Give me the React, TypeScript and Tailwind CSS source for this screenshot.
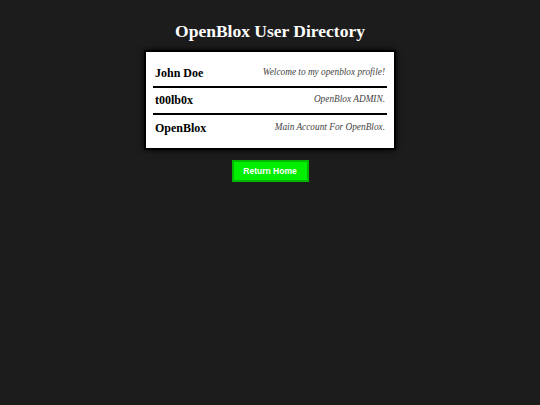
const USERS = [
  { name: "John Doe", bio: "Welcome to my openblox profile!" },
  { name: "t00lb0x", bio: "OpenBlox ADMIN." },
  { name: "OpenBlox", bio: "Main Account For OpenBlox." },
];

export default function App() {
  return (
    <div className="min-h-[405px] w-full bg-[#1c1c1c] pt-[20px] font-['Liberation_Serif',serif]">
      <h1 className="text-center text-[17.5px] font-bold leading-[22px] text-white">
        OpenBlox User Directory
      </h1>

      {/* Directory card */}
      <div className="mx-auto mt-[8px] w-[252px] border-2 border-black bg-white px-[7px] pb-[6px] pt-[9px] shadow-[0_0_6px_rgba(0,0,0,0.9)]">
        <ul>
          {USERS.map((u, i) => (
            <li
              key={u.name}
              className={
                "flex h-[27px] items-center justify-between px-[2px] pb-[2px] " +
                (i < USERS.length - 1 ? "border-b-2 border-black" : "")
              }
            >
              <span className="text-[12px] font-bold text-black">{u.name}</span>
              <span className="text-[9.3px] italic text-[#444]">{u.bio}</span>
            </li>
          ))}
        </ul>
      </div>

      <div className="mt-[10px] flex justify-center">
        <button className="h-[22px] w-[77px] border-2 border-[#00b800] bg-[#00ee00] font-['Liberation_Sans',sans-serif] text-[8.5px] font-bold text-white">
          Return Home
        </button>
      </div>
    </div>
  );
}
